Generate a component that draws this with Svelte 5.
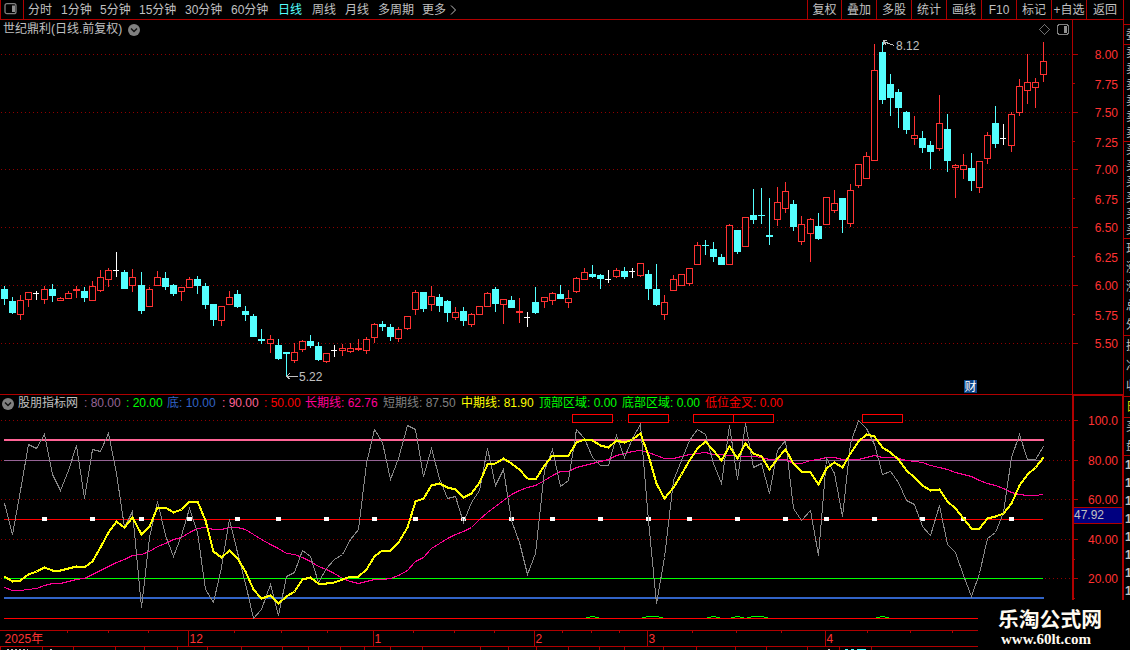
<script>
    let periodo = '日线'
    let periodos = ['分时', '1分钟', '5分钟', '15分钟', '30分钟', '60分钟', '日线', '周线', '月线', '多周期', '更多']
    let acciones = ['复权', '叠加', '多股', '统计', '画线', 'F10', '标记', '+自选', '返回']

    // tipo (c = baja, r = sube, w = igual), alto, tope, base, bajo
    let velas = `c 286 289 299 305,c 297 301 313 314,r 295 300 315 320,r 292 292 300 307,w 291 293 294 300,
        r 286 289 300 304,c 284 289 296 302,r 297 298 301 301,r 291 293 299 299,r 286 289 291 298,
        c 287 291 298 302,r 281 286 301 301,r 270 277 291 292,r 268 270 280 287,w 252 270 271 277,
        c 270 272 289 289,r 269 277 286 292,c 272 285 311 314,r 287 289 307 307,r 271 277 286 286,
        c 272 278 287 290,c 284 285 294 296,r 287 287 292 301,r 277 279 288 288,c 276 279 286 294,
        c 283 286 305 309,c 304 304 320 326,r 306 306 321 326,r 291 297 305 305,c 290 294 307 308,
        c 306 311 315 321,c 314 316 337 337,c 329 339 341 344,r 335 339 344 353,c 339 345 359 360,
        c 352 352 354 377,r 343 352 361 363,r 340 341 350 352,c 335 341 346 348,c 342 346 360 361,
        r 353 353 362 363,w 345 350 351 357,r 344 348 351 356,r 343 348 352 353,r 339 348 350 351,
        r 337 339 351 354,r 323 324 338 343,c 321 324 327 331,c 324 327 337 341,r 327 329 339 342,
        r 316 316 329 330,r 290 292 310 315,c 292 292 309 312,r 286 296 305 311,c 294 297 306 312,
        c 300 301 313 322,r 307 312 318 320,c 307 311 321 326,r 313 314 325 327,r 306 306 315 315,
        r 292 293 307 307,c 287 289 304 312,r 299 299 305 324,c 296 300 308 308,r 298 311 313 323,
        w 312 317 318 327,c 287 302 313 314,r 297 297 302 308,r 292 293 301 305,c 285 294 299 299,
        r 290 298 303 308,r 277 278 292 293,r 268 272 280 280,c 265 274 277 278,c 274 275 279 289,
        w 270 279 280 283,r 268 270 277 278,c 267 271 277 279,w 268 271 272 278,r 263 263 276 277,
        c 270 274 289 300,c 264 289 305 306,r 295 302 315 320,r 275 279 291 291,r 274 274 286 286,
        r 268 268 284 286,r 242 245 265 265,c 240 245 246 255,c 242 249 257 262,c 254 257 265 265,
        r 224 225 265 265,c 230 230 252 254,r 217 217 247 247,c 189 215 220 224,c 188 215 216 224,
        c 198 235 237 245,r 187 202 220 226,r 182 191 209 213,c 200 204 227 231,r 216 224 242 245,
        r 218 219 234 262,c 213 226 239 240,r 197 197 225 225,r 190 203 211 213,c 198 198 220 233,
        r 184 190 224 227,r 164 164 186 188,r 152 156 179 179,r 44 70 161 161,c 42 52 100 104,
        c 74 84 98 116,c 89 92 108 128,c 111 112 130 134,r 116 135 139 145,c 131 138 148 153,
        c 141 145 152 169,r 95 123 149 151,c 114 129 161 172,r 164 165 168 198,r 154 165 170 179,
        c 153 168 181 191,r 161 161 188 193,r 132 135 159 164,c 106 123 144 148,w 124 138 139 145,
        r 112 114 146 152,r 79 86 113 116,r 54 82 91 104,r 78 82 88 108,r 42 61 75 82`
        .split(',').map((v) => {
            let [tipo, ...n] = v.trim().split(' ')
            let [alto, tope, base, bajo] = n.map(Number)
            return { tipo, alto, tope, base, bajo }
        })

    let corta = [503,534,490,444,448,434,474,490,470,445,498,449,451,433,473,527,511,607,537,501,535,556,535,508,532,589,602,567,519,552,583,618,609,584,615,576,572,550,556,582,568,559,554,539,529,463,429,442,479,458,425,429,476,448,478,498,496,522,502,490,448,485,469,520,542,574,553,470,449,486,480,429,438,457,465,465,435,457,438,424,520,603,557,480,460,440,429,434,463,483,425,479,423,467,463,493,450,440,508,520,510,555,458,473,516,443,420,428,444,474,471,482,500,504,526,535,505,544,552,575,596,573,538,532,512,457,434,459,459,446]
    let media = [576,581,580,574,571,567,570,570,568,566,567,561,547,532,521,527,517,534,526,507,507,512,509,501,501,520,551,557,550,558,571,589,598,595,603,596,591,579,577,583,583,582,579,576,576,569,556,550,550,542,527,501,498,485,483,487,489,497,493,482,464,463,458,463,469,478,479,465,455,455,455,442,439,440,445,447,440,442,439,433,455,483,498,487,474,460,448,441,450,460,446,458,443,453,456,469,458,449,463,471,472,484,468,462,467,453,441,434,436,447,452,459,470,477,485,490,489,501,508,518,528,528,518,516,513,503,485,474,467,457]
    let larga = [587,590,590,589,588,585,583,583,581,579,578,574,570,566,562,559,555,554,551,546,543,539,537,532,528,527,529,529,527,527,529,534,539,544,548,553,554,557,561,566,569,573,578,581,583,581,579,579,578,575,570,561,557,548,543,538,534,531,527,519,512,506,500,494,490,487,485,480,475,471,471,467,465,463,461,459,455,453,451,450,452,455,458,458,456,454,453,452,454,454,455,456,456,456,457,459,459,459,463,463,460,459,457,457,459,459,459,457,455,457,457,458,460,461,462,465,467,469,472,474,476,480,483,485,488,492,494,495,495,494]

    let precios = [[54, '8.00'], [84, '7.75'], [112, '7.50'], [142, '7.25'], [169, '7.00'], [199, '6.75'], [227, '6.50'], [257, '6.25'], [285, '6.00'], [315, '5.75'], [343, '5.50']]
    let niveles = [[420, '100.0'], [460, '80.00'], [499, '60.00'], [539, '40.00'], [578, '20.00']]
    let valores = [
        ['', '80.00', '#966496', 37], ['', '20.00', '#00ff00', 36], ['底', '10.00', '#3264c8', 50], ['', '90.00', '#ff6496', 37],
        ['', '50.00', '#ff0000', 36], ['长期线', '62.76', '#ff0096', 73], ['短期线', '87.50', '#808080', 73],
        ['中期线', '81.90', '#ffff00', 73], ['顶部区域', '0.00', '#00ff00', 78], ['底部区域', '0.00', '#00ff00', 78], ['低位金叉', '0.00', '#ff0000', 78]
    ]
    let marcas = [5, 11, 17, 23, 29, 34, 40, 46, 51, 57, 63, 68, 74, 80, 85, 91, 97, 102, 108, 114, 119, 125]
    let cajas = [[572, 40], [628, 40], [693, 40], [733, 40], [862, 40]]
    let lomas = [[586, 599], [642, 663], [707, 720], [731, 744], [747, 768], [876, 889]]
    let meses = [[188, '12'], [373, '1'], [534, '2'], [647, '3'], [825, '4']]
    let semanas = [67, 108, 148, 234, 281, 327, 413, 454, 494, 562, 591, 619, 692, 736, 781, 867, 910, 952]
    let pestanas = [0, 42, 73, 115, 144, 177, 207, 241, 282, 308, 340, 364, 390, 422, 480, 508, 536, 568, 599, 624, 663, 696, 735, 766, 807, 839, 871]
    // textos de la columna lateral, cortada por la ventana
    let lateral = [
        [25, ''], [20, '委'], [97, '卖卖卖卖卖卖'], [97, '买买买买买买'],
        [97, '现涨涨总外'], [61, '换净收'], [21, '日'], [38, '买盘'], [194, '11111111']
    ]

    function cx(i){
        return Math.floor(4.03 + i * 8.0601)
    }
    function puntos(serie){
        return serie.map((y, i) => `${cx(i) + 0.5},${y + 0.5}`).join(' ')
    }
</script>

<div class="pantalla">
    <div class="principal">
        <div class="barra">
            <button class="panel" aria-label="panel">
                <svg width="14" height="12" viewBox="0 0 14 12"><rect x="1" y="0.7" width="11" height="10" rx="2" fill="none" stroke="#808080" stroke-width="1.3" /><rect x="8" y="2.5" width="3" height="6.5" fill="#909090" /></svg>
            </button>
            <div class="periodos">
                {#each periodos as p}
                <button class:activo={p === periodo} on:click={() => periodo = p}>{p}</button>
                {/each}
                <svg width="8" height="12" viewBox="0 0 8 12"><path d="M1 1.5L5.5 6L1 10.5" fill="none" stroke="#c0c0c0" /></svg>
            </div>
            <div class="acciones">
                {#each acciones as a}
                <button>{a}</button>
                {/each}
            </div>
        </div>

        <div class="precio">
            <div class="titulo">
                <span>世纪鼎利(日线.前复权)</span>
                <svg width="12" height="12" viewBox="0 0 12 12"><circle cx="6" cy="6" r="6" fill="#808080" /><path d="M3 4.5L6 7.5L9 4.5" fill="none" stroke="#111" stroke-width="1.5" /></svg>
            </div>
            <svg class="grafico" width="1124" height="374" viewBox="0 20 1124 374">
                {#each precios as [y, texto], i}
                    {#if i % 2 === 0}
                    <line class="punteada" x1="1" x2="1072" y1={y + 0.5} y2={y + 0.5} />
                    {/if}
                    <rect class="eje" x="1072" y={i % 2 ? y - 1 : y} width={i % 2 ? 3 : 6} height="1" />
                    <text class="escala" x="1118" y={y + 5}>{texto}</text>
                {/each}
                <rect class="eje" x="1072" y="20" width="1" height="374" />
                <rect class="eje" x="1123" y="20" width="1" height="374" />
                {#each velas as v, i}
                    <g class={v.tipo}>
                        {#if v.tipo === 'r'}
                        <rect x={cx(i)} y={v.alto} width="1" height={v.tope - v.alto} />
                        <rect x={cx(i)} y={v.base} width="1" height={v.bajo - v.base} />
                        <rect class="hueco" x={cx(i) - 2.5} y={v.tope + 0.5} width="6" height={v.base - v.tope - 1} />
                        {:else}
                        <rect x={cx(i)} y={v.alto} width="1" height={v.bajo - v.alto} />
                        <rect x={cx(i) - 3} y={v.tope} width={v.tipo === 'w' ? 6 : 7} height={v.base - v.tope} />
                        {/if}
                    </g>
                {/each}
                <path class="flecha" d="M883.5 41.5L894 45.5M883 45V40.5H887M883 41.5L886 44.5" />
                <text class="nota" x="896" y="50">8.12</text>
                <path class="flecha" d="M286.5 376.5H298M290 373L286.5 376.5L290 379" />
                <text class="nota" x="299" y="381">5.22</text>
                <path d="M1039.5 29.5L1044.5 24.5L1049.5 29.5L1044.5 34.5Z" fill="none" stroke="#707070" />
                <rect x="1057.7" y="24.7" width="10.6" height="9.6" rx="1.5" fill="none" stroke="#808080" stroke-width="1.3" />
                <rect x="1064" y="26" width="3" height="7" fill="#909090" />
                <rect x="964" y="380" width="13" height="13" fill="#0b4488" />
                <text x="964.5" y="391" fill="#fff">财</text>
            </svg>
        </div>

        <div class="indicador">
            <div class="leyenda">
                <svg width="12" height="12" viewBox="0 0 12 12"><circle cx="6" cy="6" r="6" fill="#808080" /><path d="M3 4.5L6 7.5L9 4.5" fill="none" stroke="#111" stroke-width="1.5" /></svg>
                <span class="nombre">股朋指标网</span>
                {#each valores as [nombre, valor, color, ancho]}
                <span style="color:{color};width:{ancho}px">{nombre}: {valor}</span>
                {/each}
            </div>
            <svg class="grafico" width="1124" height="236" viewBox="0 394 1124 236">
                {#each niveles as [y, texto]}
                    <line class="punteada" x1="1" x2="1072" y1={y + 0.5} y2={y + 0.5} />
                    <rect class="eje" x="1073" y={y} width="5" height="1" />
                    <rect class="eje" x="1073" y={y + 20} width="2" height="1" />
                    <text class="escala" x="1118" y={y + 5}>{texto}</text>
                {/each}
                <rect class="eje" x="0" y="394" width="1124" height="1" />
                <rect class="eje" x="1072" y="395" width="52" height="1" />
                <rect class="eje" x="1072" y="394" width="2" height="236" />
                <rect class="eje" x="1122" y="394" width="2" height="236" />
                <rect x="4" y="439" width="1040" height="2" fill="#ff6496" />
                <rect x="4" y="460" width="1039" height="1" fill="#966496" />
                <rect x="4" y="519" width="1039" height="1" fill="#ff0000" />
                <rect x="4" y="578" width="1039" height="1" fill="#00ff00" />
                <rect x="4" y="597" width="1040" height="2" fill="#3264c8" />
                <rect x="4" y="618" width="1039" height="1" fill="#ff0000" />
                {#each marcas as m}
                <rect x={cx(m) - 2} y="517" width="5" height="4" fill="#fff" />
                {/each}
                {#each cajas as [x, w]}
                <rect x={x + 0.5} y="414.5" width={w} height="8" fill="#000" stroke="#ff0000" />
                {/each}
                {#each lomas as [a, b]}
                <path d="M{a} 617.5H{a + 4}M{a + 4} 616.5H{b - 4}M{b - 4} 617.5H{b}" stroke="#00ff00" />
                {/each}
                <polyline points={puntos(larga)} stroke="#ff0096" />
                <polyline points={puntos(corta)} stroke="#888888" />
                <polyline points={puntos(media)} stroke="#ffff00" stroke-width="2" />
                <rect x="1074" y="507" width="48" height="17" fill="#000080" />
                <rect class="eje" x="1074" y="507" width="48" height="1" />
                <rect class="eje" x="1074" y="523" width="48" height="1" />
                <text class="nota" x="1074" y="519">47.92</text>
            </svg>
        </div>

        <svg class="grafico" width="1124" height="20" viewBox="0 630 1124 20">
            <rect class="eje" x="0" y="630" width="1124" height="1" />
            <rect class="eje" x="0" y="646" width="1124" height="1" />
            {#each semanas as x}
            <rect class="eje" x={x} y="631" width="1" height="2" />
            {/each}
            {#each meses as [x, mes]}
            <rect class="eje" x={x} y="631" width="1" height="15" />
            <text class="fecha" x={x + 1.5} y="643">{mes}</text>
            {/each}
            {#each pestanas as x}
            <rect class="eje" x={x} y="647" width="1" height="3" />
            {/each}
            <text class="fecha" x="4.5" y="643">2025年</text>
            <path d="M7 649.5H28M50 649.5H52M828 649.5H830" stroke="#c0c0c0" stroke-dasharray="2 2" />
            <path d="M845 649.5H848M851 649.5H854M857 649.5H866" stroke="#54ffff" />
        </svg>
    </div>

    <div class="lateral">
        {#each lateral as [alto, texto], i}
        <div class:dia={i === 6} class:barras={i === 8} style="height:{alto}px">
            {#each texto as letra}
            <span>{letra}</span>
            {/each}
        </div>
        {/each}
    </div>

    <div class="marca">
        <strong>乐淘公式网</strong>
        <b>www.60lt.com</b>
    </div>
</div>

<style>
    :global(body){
        background: #000;
        overflow: hidden;
    }
    .pantalla{
        position: relative;
        display: flex;
        width: 1130px;
        height: 650px;
        overflow: hidden;
        background: #000;
        color: #c0c0c0;
        font: 12px/19px "Liberation Sans", "Noto Sans CJK SC", sans-serif;
    }
    .principal{
        width: 1124px;
        flex: none;
    }
    .barra{
        display: flex;
        height: 20px;
        box-sizing: border-box;
        border-bottom: 1px solid #b00000;
    }
    button{
        background: none;
        border: 0;
        padding: 0;
        color: inherit;
        font: inherit;
        line-height: 18px;
        text-align: left;
        white-space: nowrap;
    }
    .panel{
        display: flex;
        width: 24px;
        box-sizing: border-box;
        border-left: 1px solid #b00000;
        border-right: 1px solid #b00000;
        padding: 3px 0 0 3px;
        line-height: 0;
    }
    .periodos{
        display: grid;
        grid-template-columns: 33px 39px 39px 46px 46px 47px 34px 33px 33px 44px 28px 8px;
        align-items: center;
        padding-left: 4px;
        flex: 1;
    }
    .periodos .activo{
        color: #54ffff;
    }
    .acciones{
        display: grid;
        grid-template-columns: 34px 35px 35px 35px 35px 35px 35px 35px 37px;
        border-right: 1px solid #b00000;
    }
    .acciones button{
        border-left: 1px solid #b00000;
        text-align: center;
    }
    .precio, .indicador{
        position: relative;
    }
    .titulo{
        position: absolute;
        left: 3px;
        top: 0;
        display: flex;
        align-items: center;
        gap: 6px;
    }
    .leyenda{
        position: absolute;
        left: 2px;
        top: 0;
        display: flex;
        align-items: center;
        gap: 5px;
        white-space: nowrap;
    }
    .leyenda span{
        flex: none;
    }
    .leyenda .nombre{
        width: 61px;
        margin-left: -1px;
    }
    .grafico{
        display: block;
        shape-rendering: crispEdges;
    }
    .eje{
        fill: #b00000;
    }
    .punteada{
        stroke: #900000;
        stroke-dasharray: 1 3;
    }
    .escala{
        fill: #ff3232;
        text-anchor: end;
    }
    .fecha{
        fill: #ff3232;
    }
    .nota{
        fill: #c0c0c0;
    }
    .flecha{
        fill: none;
        stroke: #c0c0c0;
    }
    .c{
        fill: #54ffff;
    }
    .r{
        fill: #ff3232;
    }
    .w{
        fill: #fff;
    }
    .hueco{
        fill: #000;
        stroke: #ff3232;
    }
    polyline{
        fill: none;
    }
    .lateral{
        width: 6px;
        overflow: hidden;
    }
    .lateral div{
        display: flex;
        flex-direction: column;
        justify-content: space-around;
        box-sizing: border-box;
        border-bottom: 1px solid #b00000;
        padding-left: 2px;
        line-height: 12px;
    }
    .lateral .dia{
        color: #d8d800;
    }
    .lateral .barras{
        border: 0;
        padding: 0 0 50px 1px;
        font-weight: bold;
    }
    .marca{
        position: absolute;
        left: 978px;
        top: 600px;
        width: 152px;
        height: 50px;
        box-sizing: border-box;
        padding: 6px 0 0 20px;
        background: #000;
        color: #fffaf0;
        display: flex;
        flex-direction: column;
    }
    .marca strong{
        font: bold 20.8px/24px "Noto Sans CJK SC", sans-serif;
    }
    .marca b{
        font: bold 15px/18px "Liberation Serif", serif;
        padding-left: 3px;
    }
</style>
